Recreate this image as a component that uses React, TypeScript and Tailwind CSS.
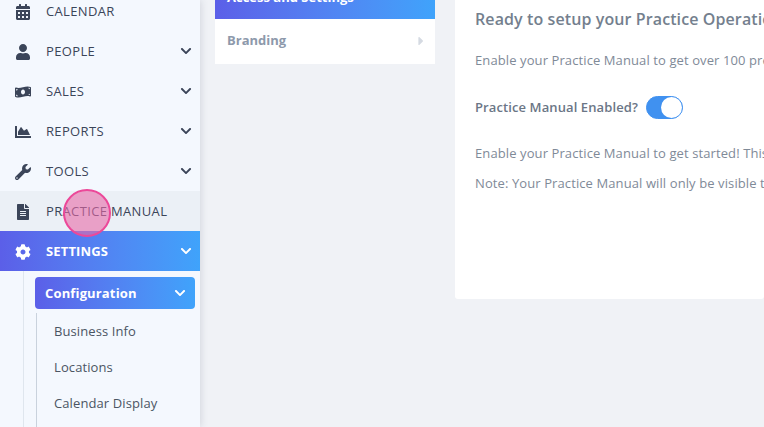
import React from "react";
import {
  FaCalendarAlt,
  FaCaretRight,
  FaChartArea,
  FaChevronDown,
  FaCog,
  FaFileAlt,
  FaMoneyBillWave,
  FaUser,
  FaWrench,
} from "react-icons/fa";

const gradient = "bg-gradient-to-r from-[#5b5fe8] to-[#3fa3fb]";

const navItems = [
  { label: "CALENDAR", icon: FaCalendarAlt },
  { label: "PEOPLE", icon: FaUser, chevron: true },
  { label: "SALES", icon: FaMoneyBillWave, chevron: true },
  { label: "REPORTS", icon: FaChartArea, chevron: true },
  { label: "TOOLS", icon: FaWrench, chevron: true },
  { label: "PRACTICE MANUAL", icon: FaFileAlt, hover: true },
];

const subItems = ["Business Info", "Locations", "Calendar Display", "Services"];

const Sidebar: React.FC = () => (
  <aside className="relative z-10 w-[200px] shrink-0 bg-[#f4f8fe] shadow-[0_0_8px_rgba(60,70,100,0.2)]">
    <div className="-mt-[9px]">
      {navItems.map((item) => (
        <div
          key={item.label}
          className={`flex h-10 items-center pl-[15px] pr-[8px] pt-[2px] text-[#3b4559] ${
            item.hover ? "bg-[#ebf0f6]" : ""
          }`}
        >
          <span className="flex w-[31px] shrink-0">
            <item.icon className="text-[16px]" />
          </span>
          <span className="flex-1 text-[13px] tracking-[0.35px]">{item.label}</span>
          {item.chevron && <FaChevronDown className="-mt-[3px] text-[12px]" />}
        </div>
      ))}
      <div className={`flex h-10 items-center pl-[15px] pr-[8px] pt-[2px] text-white ${gradient}`}>
        <span className="flex w-[31px] shrink-0">
          <FaCog className="text-[16px]" />
        </span>
        <span className="flex-1 text-[13px] font-bold tracking-[0.15px]">SETTINGS</span>
        <FaChevronDown className="-mt-[3px] text-[12px]" />
      </div>
    </div>
    <div className="ml-[23px] mr-[5px] border-l border-[#dfe6ee] pt-[6px]">
      <div
        className={`ml-[11px] flex h-8 items-center justify-between rounded-[4px] pl-[10px] pr-[9px] pt-[2px] text-white ${gradient}`}
      >
        <span className="text-[13px] font-bold tracking-[0.15px]">Configuration</span>
        <FaChevronDown className="-mt-[3px] text-[12px]" />
      </div>
      <div className="ml-[12px] mt-[4px] border-l border-[#c9d2dd] pl-[17px] text-[13px] tracking-[0.1px] text-[#4b5563]">
        {subItems.map((item) => (
          <div key={item} className="flex h-9 items-center pt-[2px]">
            {item}
          </div>
        ))}
      </div>
    </div>
  </aside>
);

const TabPanel: React.FC = () => (
  <div className="-mt-[20px] h-fit w-[220px] shrink-0 bg-white">
    <div className={`flex h-[39px] items-center px-3 pb-[3px] text-[13px] font-bold text-white ${gradient}`}>
      Access and Settings
    </div>
    <div className="flex h-[45px] items-center justify-between pb-[2px] pl-3 pr-[7px] text-[13px] font-bold text-[#8d99ab]">
      Branding
      <FaCaretRight className="text-[14px] text-[#d5dae2]" />
    </div>
  </div>
);

const ManualCard: React.FC = () => (
  <div className="-mt-[20px] h-[319px] min-w-0 flex-1 overflow-hidden whitespace-nowrap rounded-b-[3px] bg-white pl-5 tracking-[0.1px] text-[#7f8a98]">
    <h2 className="mt-[27px] text-[16px] font-semibold leading-[24px] text-[#747f8e]">
      Ready to setup your Practice Operations Manual?
    </h2>
    <p className="mt-[19px] text-[13px] leading-[20px]">
      Enable your Practice Manual to get over 100 pre-built templates and procedures.
    </p>
    <div className="mt-[26px] flex items-center gap-[8px]">
      <span className="text-[13px] font-semibold text-[#6b7686]">Practice Manual Enabled?</span>
      <span className="flex h-[23px] w-[37px] items-center justify-end rounded-full border border-[#4091f0] bg-[#4091f0]">
        <span className="h-[21px] w-[21px] rounded-full bg-white" />
      </span>
    </div>
    <p className="mt-[24px] text-[13px] leading-[20px]">
      Enable your Practice Manual to get started! This will add it to your sidebar menu.
    </p>
    <p className="mt-[10px] text-[13px] leading-[20px]">
      Note: Your Practice Manual will only be visible to your team members.
    </p>
  </div>
);

const App: React.FC = () => (
  <div className="relative flex h-[427px] w-[764px] overflow-hidden bg-[#f0f2f6] font-['Open_Sans',sans-serif]">
    <Sidebar />
    <main className="flex min-w-0 flex-1 gap-5 pl-[15px]">
      <TabPanel />
      <ManualCard />
    </main>
    <div className="absolute left-[63px] top-[189px] z-20 h-12 w-12 rounded-full border-2 border-[#ec4899] bg-[#e86aa8]/60" />
  </div>
);

export default App;
